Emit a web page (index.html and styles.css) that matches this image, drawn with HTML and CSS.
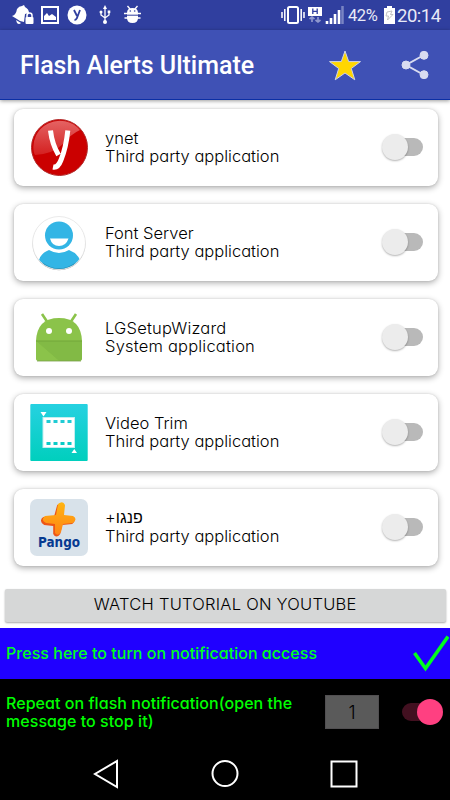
FILE: index.html
```html
<!DOCTYPE html>
<html lang="en">
<head>
    <meta charset="UTF-8">
    <meta name="viewport" content="width=device-width, initial-scale=1.0">
    <title>Flash Alerts Ultimate</title>
    <link rel="stylesheet" href="styles.css">
</head>
<body>
    <div class="screen">
        <div class="status-bar">
            <svg class="status-left" width="150" height="30" viewBox="0 0 150 30">
                <g fill="#fff">
                    <!-- bell with lock -->
                    <path d="M12 16Q16 15 17 9Q19 6 22 6L24 5L25 7Q29 9 29 13L25 14L24 22L20 21Q17 19 12 16Z"/>
                    <path d="M16 20L21 23Q19 25 17 23Z"/>
                    <rect x="25.500" y="17" width="8" height="7" rx="1"/>
                    <path d="M27 17V15.500Q27 13 29.500 13T32 15.500V17" fill="none" stroke="#fff" stroke-width="1.500"/>
                    <!-- picture -->
                    <rect x="42" y="7" width="16" height="16" fill="none" stroke="#fff" stroke-width="2"/>
                    <path d="M44 20V16L47 13L49 16L52 14L56 17V20Z"/>
                    <!-- ynet -->
                    <circle cx="77" cy="15" r="9.500"/>
                    <path d="M74 10L77 16M80 10L77 18Q76 20 74.500 20" fill="none" stroke="#303f9f" stroke-width="1.800"/>
                    <!-- usb -->
                    <path d="M105 8V22M101 12V15L105 18L109 15V12" fill="none" stroke="#fff" stroke-width="1.300"/>
                    <path d="M103 9L105 5L107 9Z"/>
                    <circle cx="105" cy="22" r="2"/>
                    <circle cx="101" cy="12" r="1.500"/>
                    <rect x="107.700" y="10.500" width="2.600" height="2.600"/>
                    <!-- debug -->
                    <path d="M127 13Q127 8 132.500 8T138 13ZM127 14H138V18Q138 23 132.500 23T127 18Z"/>
                    <path d="M127.500 6L130 9M137.500 6L135 9M124 13.500H141M124.500 18H140.500" stroke="#fff" stroke-width="1.300"/>
                    <path d="M126 15.200H139" stroke="#303f9f"/>
                    <circle cx="130.300" cy="11" r=".8" fill="#303f9f"/>
                    <circle cx="134.700" cy="11" r=".8" fill="#303f9f"/>
                </g>
            </svg>
            <div class="status-right">
                <svg width="66" height="30" viewBox="280 0 66 30">
                    <!-- vibrate -->
                    <rect x="288" y="7" width="10" height="16" rx="1.500" fill="none" stroke="#fff" stroke-width="2"/>
                    <path d="M284.800 9V21M301.200 9V21M282 12V18M304 12V18" stroke="#fff" stroke-width="1.500"/>
                    <!-- mobile data -->
                    <rect x="308" y="7" width="14" height="9" fill="#fff"/>
                    <path d="M312.800 8.500V14M317.200 8.500V14M313 11.300H317" stroke="#303f9f" stroke-width="1.300"/>
                    <path d="M312 17V22M309.500 19L312 17L314.500 19M318 17V22M315.500 20L318 22L320.500 20" fill="none" stroke="#8f98ce" stroke-width="1.700"/>
                    <!-- signal -->
                    <path d="M327 21V24M331 18V24M335 14V24M339 10V24" stroke="#fff" stroke-width="2.600"/>
                    <path d="M342.500 6V24" stroke="#7984c3" stroke-width="2.500"/>
                </svg>
                <span class="battery-level">42%</span>
                <svg width="14" height="30" viewBox="0 0 14 30">
                    <path d="M1 8H4V6H9V8H12V24H1Z" fill="#fff"/>
                    <path d="M4 12L9 11L7.500 14.500H10L4.500 20L5.500 16H3Z" fill="none" stroke="#bbb" stroke-width=".9"/>
                </svg>
                <span class="clock">20:14</span>
            </div>
        </div>

        <div class="app-bar">
            <h1>Flash Alerts Ultimate</h1>
            <svg width="120" height="40" viewBox="325 46 120 40">
                <path d="M345 51L348.700 61.600H360.500L351.300 68.500L354.800 79.800L345 73L335.200 79.800L338.700 68.500L329.500 61.600H341.300Z" fill="#ffd600" stroke="#cdd1ea"/>
                <g fill="#d9dcf0" stroke="#d9dcf0">
                    <path d="M424 55L406 65L424 75" fill="none" stroke-width="2"/>
                    <circle cx="424" cy="55.300" r="4"/>
                    <circle cx="406" cy="65" r="4"/>
                    <circle cx="424" cy="74.700" r="4"/>
                </g>
            </svg>
        </div>

        <div class="app-list">
            <div class="card">
                <svg class="app-icon" viewBox="0 0 58 58">
                    <defs>
                        <linearGradient id="gloss" x1="0" y1="0" x2="0" y2="1">
                            <stop offset="0" stop-color="#e46363"/>
                            <stop offset="1" stop-color="#d42020"/>
                        </linearGradient>
                    </defs>
                    <circle cx="29.500" cy="28.500" r="28" fill="#cb0000" stroke="#b22a2a"/>
                    <path d="M4 34A26.500 26.500 0 0 1 50 11Q41 15 33 25Q23 35 5 36Z" fill="url(#gloss)"/>
                    <path d="M20.500 11.500Q22 25 28.500 36M37.800 11.500Q36 29 31 41Q28 49 23 48" fill="none" stroke="#fff" stroke-width="5"/>
                </svg>
                <div class="app-text"><p>ynet</p><p>Third party application</p></div>
                <div class="switch"></div>
            </div>
            <div class="card">
                <svg class="app-icon" viewBox="0 0 58 58">
                    <defs>
                        <clipPath id="disc"><circle cx="29" cy="29" r="26"/></clipPath>
                    </defs>
                    <circle cx="29" cy="29.700" r="26.500" fill="#aaa"/>
                    <circle cx="29" cy="29" r="26.500" fill="#fff" stroke="#e4e4e4" stroke-width=".8"/>
                    <g fill="#33b5e5" clip-path="url(#disc)">
                        <circle cx="29" cy="21.500" r="14"/>
                        <path d="M9 46Q11 39 19 36Q29 42 39 36Q47 39 50 46V58H9Z"/>
                        <path d="M12 49Q29 61 46 49" fill="none" stroke="#278fb6" stroke-width="1.300"/>
                    </g>
                    <path d="M20 24.500H38.500Q36 32 29 32T20 24.500Z" fill="#fff"/>
                </svg>
                <div class="app-text"><p>Font Server</p><p>Third party application</p></div>
                <div class="switch"></div>
            </div>
            <div class="card">
                <svg class="app-icon" viewBox="0 0 58 58">
                    <path d="M12 5L18 14M46 5L40 14" stroke="#8bc34a" stroke-width="2.600"/>
                    <path d="M6 32Q7 9 29 9T52 32V49Q52 52 49 52H9Q6 52 6 49Z" fill="#8bc34a"/>
                    <path d="M6 32H52V49Q52 52 49 52H29L6 32Z" fill="#82ba45"/>
                    <path d="M29 52L6 32V49Q6 52 9 52Z" fill="#8bc34a"/>
                    <path d="M6 32H52" stroke="#72a63b"/>
                    <path d="M7 52H51" stroke="#789e4a" stroke-width=".8"/>
                    <circle cx="19" cy="22" r="3" fill="#fff"/>
                    <circle cx="39" cy="22" r="3" fill="#fff"/>
                </svg>
                <div class="app-text"><p class="wide">LGSetupWizard</p><p class="wide">System application</p></div>
                <div class="switch"></div>
            </div>
            <div class="card">
                <svg class="app-icon" viewBox="0 0 58 58">
                    <defs>
                        <linearGradient id="trim" x1="0" y1="0" x2="0" y2="1">
                            <stop offset="0" stop-color="#26d1e1"/>
                            <stop offset="1" stop-color="#00cfbd"/>
                        </linearGradient>
                    </defs>
                    <rect x=".3" width="57.400" height="57" rx="1" fill="url(#trim)"/>
                    <rect x="13" y="13.500" width="31.500" height="30" fill="#fff" stroke="#c1eef0"/>
                    <path d="M16.500 17.500H43" stroke="#20cbd4" stroke-width="3" stroke-dasharray="4 3"/>
                    <path d="M16.500 39.500H43" stroke="#0bcbc7" stroke-width="3" stroke-dasharray="4 3"/>
                    <path d="M10.500 8H16.500L13.500 12.500ZM41.500 49H47L44.300 45Z" fill="#fff"/>
                </svg>
                <div class="app-text"><p>Video Trim</p><p>Third party application</p></div>
                <div class="switch"></div>
            </div>
            <div class="card">
                <svg class="app-icon" viewBox="0 0 58 58">
                    <defs>
                        <linearGradient id="plus" x1="0" y1="0" x2="0" y2="1">
                            <stop offset="0" stop-color="#ffb511"/>
                            <stop offset="1" stop-color="#ff8415"/>
                        </linearGradient>
                    </defs>
                    <rect width="58" height="57" rx="7" fill="#d8e2ea"/>
                    <path d="M28 5Q33 1 35 6L34 16L43 17Q48 20 43 24L33 25L31 34Q27 39 24 34L24 26L15 25Q9 21 14 17L25 16Z" fill="#ed5516" transform="translate(-.8 1)"/>
                    <path d="M28 5Q33 1 35 6L34 16L43 17Q48 20 43 24L33 25L31 33Q28 38 25 34L25 25L16 24Q10 21 15 17L26 16Z" fill="url(#plus)"/>
                    <text class="pango" x="8" y="47.500" textLength="42" lengthAdjust="spacingAndGlyphs">Pango</text>
                </svg>
                <div class="app-text"><p><bdo dir="ltr">+</bdo><span class="hebrew" dir="rtl">פנגו</span></p><p>Third party application</p></div>
                <div class="switch"></div>
            </div>
        </div>

        <button class="tutorial">WATCH TUTORIAL ON YOUTUBE</button>

        <div class="access">
            <span>Press here to turn on notification access</span>
            <svg width="36" height="38" viewBox="0 0 36 38">
                <path d="M1.500 18L12.500 33.500L35 1.500" fill="none" stroke="#00ff1e" stroke-width="3.600"/>
            </svg>
        </div>

        <div class="repeat">
            <p>Repeat on flash notification(open the<br>message to stop it)</p>
            <div class="count">1</div>
            <div class="switch on"></div>
        </div>

        <div class="nav-bar">
            <svg width="450" height="55" viewBox="0 745 450 55">
                <g fill="none" stroke="#fff" stroke-width="2">
                    <path d="M117 761V787L95 774Z"/>
                    <circle cx="225" cy="773.500" r="12.500"/>
                    <rect x="331.500" y="761.500" width="25" height="25"/>
                </g>
            </svg>
        </div>
    </div>
</body>
</html>
```
FILE: styles.css
```css
* {
    margin: 0;
    padding: 0;
    box-sizing: border-box;
}

body {
    width: 450px;
    background: #fff;
    color: #000;
    font-family: Inter, "Liberation Sans", sans-serif;
    font-feature-settings: "cv11";
}

svg {
    display: block;
    flex: none;
}

.screen {
    display: flex;
    flex-direction: column;
    height: 800px;
    overflow: hidden;
}

.status-bar {
    display: flex;
    justify-content: space-between;
    height: 30px;
    padding-right: 9px;
    background: #303f9f;
    color: #e8eaf7;
    font-family: Roboto, sans-serif;
}

.status-right {
    display: flex;
    align-items: center;
}

.battery-level {
    width: 32px;
    margin: 1px 3px 0 2px;
    font-size: 16.5px;
    letter-spacing: -0.4px;
}

.clock {
    width: 44px;
    margin-top: 1px;
    font-size: 18.5px;
    letter-spacing: -0.5px;
}

.app-bar {
    display: flex;
    align-items: center;
    justify-content: space-between;
    height: 70px;
    padding: 2px 5px 0 20px;
    background: #3f51b5;
    border-bottom: 1px solid #0b2fa5;
    box-shadow: 0 1px 4px rgba(0, 0, 0, 0.4);
    z-index: 1;
}

.app-bar h1 {
    color: #fff;
    font: 500 25px Roboto, sans-serif;
    white-space: nowrap;
}

.app-list {
    display: flex;
    flex-direction: column;
    gap: 18px;
    padding: 9px 12.5px 0 14px;
}

.card {
    display: flex;
    align-items: center;
    height: 77px;
    padding: 0 15px 1px 16px;
    border-radius: 9px;
    background: #fff;
    box-shadow: 0 2px 6px rgba(0, 0, 0, 0.32), 0 0 2px rgba(0, 0, 0, 0.12);
}

.app-icon {
    width: 58px;
    height: 58px;
    margin-top: 1px;
}

.app-text {
    flex: 1;
    padding: 0 0 1px 17px;
    font-size: 16.5px;
    font-weight: 300;
    line-height: 18px;
    white-space: nowrap;
}

.app-text .wide {
    letter-spacing: 0.2px;
}

.hebrew {
    font-family: "DejaVu Sans", sans-serif;
    font-size: 16px;
}

.pango {
    fill: #063a91;
    font: bold 14px "DejaVu Sans", sans-serif;
}

.switch {
    display: flex;
    align-items: center;
    flex: none;
    width: 37.5px;
    height: 18px;
    border-radius: 9px;
    background: #b9b9b9;
}

.switch::before {
    content: "";
    flex: none;
    width: 26px;
    height: 26px;
    margin-left: -3.5px;
    border-radius: 50%;
    background: #ececec;
    box-shadow: 0 1px 2px rgba(0, 0, 0, 0.3);
}

.tutorial {
    flex: none;
    width: 440.5px;
    height: 33px;
    margin: 23px 0 6px 5px;
    padding: 0 0 3px;
    border: none;
    border-radius: 2px;
    background: #d6d7d7;
    box-shadow: 0 1px 2px rgba(0, 0, 0, 0.35);
    color: #000;
    font: 300 16.5px Inter, sans-serif;
    letter-spacing: 0.25px;
}

.access {
    display: flex;
    align-items: center;
    justify-content: space-between;
    height: 51px;
    padding: 0 1px 0 6px;
    background: #2000ff;
    color: #00ff1e;
    font-size: 16px;
    font-weight: 500;
}

.access span {
    padding-bottom: 2px;
    letter-spacing: 0.03px;
}

.repeat {
    display: flex;
    align-items: flex-start;
    height: 66px;
    padding: 16px 8px 0 6px;
    background: #000;
    color: #00ff00;
    font-size: 16px;
    font-weight: 500;
    line-height: 18px;
    letter-spacing: 0.05px;
    white-space: nowrap;
}

.repeat p {
    width: 319px;
    margin-top: -1px;
}

.count {
    width: 54px;
    height: 34px;
    border: 1px solid #514f51;
    background: #5a5a5a;
    color: #000;
    font-size: 18px;
    font-weight: 300;
    line-height: 33px;
    text-align: center;
}

.switch.on {
    justify-content: flex-end;
    margin: 8px 0 0 23px;
    background: #421020;
}

.switch.on::before {
    margin: 0 -3px 0 0;
    background: #ff4081;
    box-shadow: none;
}

.nav-bar {
    height: 55px;
    background: #000;
}
```
